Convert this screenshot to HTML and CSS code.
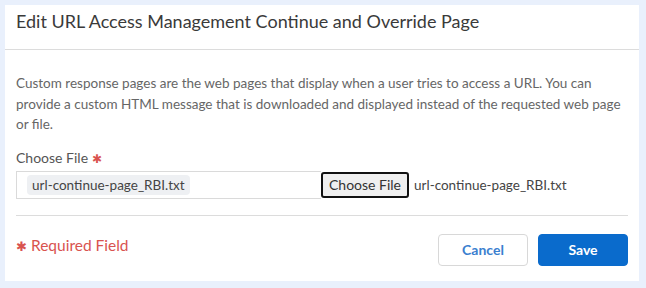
FILE: index.html
```html
<!DOCTYPE html>
<html lang="en">
<head>
<meta charset="UTF-8" />
<title>Edit URL Access Management Continue and Override Page</title>
<link rel="stylesheet" href="styles.css">
</head>
<body>

<div class="modal">
  <header class="modal-head">
    <h1>Edit URL Access Management Continue and Override Page</h1>
  </header>

  <div class="modal-body">
    <p class="desc">Custom response pages are the web pages that display when a user tries to access a URL. You can provide a custom HTML message that is downloaded and displayed instead of the requested web page or file.</p>

    <label class="field-label">Choose File <span class="req">✱</span></label>
    <div class="file-row">
      <div class="file-box">
        <span class="chip">url-continue-page_RBI.txt</span>
      </div>
      <button class="choose-btn" type="button">Choose File</button>
      <span class="file-name">url-continue-page_RBI.txt</span>
    </div>
  </div>

  <footer class="modal-foot">
    <div class="required"><span class="req">✱</span> Required Field</div>
    <div class="actions">
      <button class="btn btn-cancel" type="button">Cancel</button>
      <button class="btn btn-save" type="button">Save</button>
    </div>
  </footer>
</div>

</body>
</html>
```

FILE: styles.css
```css
body {
  margin: 0;
  padding: 5px 7px 7px 5px;
  background: #e9f0fc;
  font-family: Lato, 'Open Sans', sans-serif;
  color: #333;
}
.modal {
  background: #fff;
  height: 276px;
  display: flex;
  flex-direction: column;
}
.modal-head {
  height: 44px;
  border-bottom: 1px solid #dcdcdc;
  padding: 0 11px;
}
.modal-head h1 {
  margin: 0;
  padding-top: 3px;
  font-size: 18px;
  font-weight: 400;
  line-height: 26px;
  color: #3a3a3a;
}
.modal-body {
  padding: 23px 11px 0;
}
.desc {
  margin: 0;
  font-size: 13.5px;
  line-height: 20.5px;
  color: #666;
}
.field-label {
  display: block;
  margin-top: 15px;
  font-size: 14px;
  line-height: 16px;
  color: #555;
}
.req {
  color: #d9534f;
  font-size: 0.85em;
}
.file-row {
  display: flex;
  align-items: center;
  margin-top: 4px;
}
.file-box {
  width: 294px;
  height: 26px;
  border: 1px solid #dadada;
  border-right: none;
  padding-left: 10px;
  display: flex;
  align-items: center;
}
.chip {
  background: #eef0f3;
  border-radius: 4px;
  padding: 2px 5px;
  font-size: 13.5px;
  line-height: 16px;
  color: #444;
}
.choose-btn {
  width: 88px;
  height: 26px;
  border: 2px solid #111;
  border-radius: 3px;
  background: #efefef;
  font-family: Lato, sans-serif;
  font-size: 14px;
  color: #333;
  padding: 0;
}
.file-name {
  margin-left: 5px;
  font-size: 13.5px;
  color: #444;
}
.modal-foot {
  margin: auto 11px 0;
  border-top: 1px solid #dcdcdc;
  height: 65px;
  display: flex;
  justify-content: space-between;
  align-items: center;
}
.required {
  font-size: 15.5px;
  color: #d9534f;
  margin-top: -7px;
}
.actions {
  display: flex;
  gap: 10px;
  margin-top: 2px;
}
.btn {
  width: 90px;
  height: 32px;
  border-radius: 4px;
  font-family: Lato, sans-serif;
  font-size: 14px;
  font-weight: 700;
  cursor: pointer;
}
.btn-cancel {
  background: #fff;
  border: 1px solid #d8d8d8;
  color: #3b7fcf;
}
.btn-save {
  background: #0a6bcc;
  border: 1px solid #0a6bcc;
  color: #fff;
}
```
